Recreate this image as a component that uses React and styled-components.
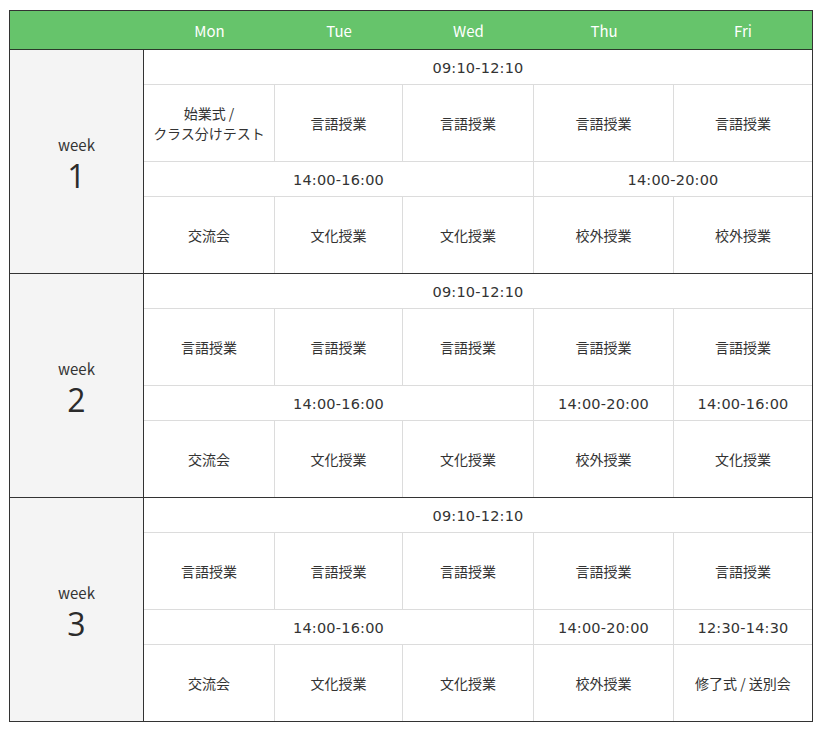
import React from 'react'
import styled, { createGlobalStyle } from 'styled-components'

const GlobalStyle = createGlobalStyle`
  body {
    margin: 0;
    background: #fff;
    font-family: "Noto Sans CJK JP", sans-serif;
    color: #333;
  }
`

const days = ["Mon", "Tue", "Wed", "Thu", "Fri"];

const weeks = [
  {
    no: 1,
    am: [["09:10-12:10", 5]],
    amClasses: ["始業式 /\nクラス分けテスト", "言語授業", "言語授業", "言語授業", "言語授業"],
    pm: [["14:00-16:00", 3], ["14:00-20:00", 2]],
    pmClasses: ["交流会", "文化授業", "文化授業", "校外授業", "校外授業"],
  },
  {
    no: 2,
    am: [["09:10-12:10", 5]],
    amClasses: ["言語授業", "言語授業", "言語授業", "言語授業", "言語授業"],
    pm: [["14:00-16:00", 3], ["14:00-20:00", 1], ["14:00-16:00", 1]],
    pmClasses: ["交流会", "文化授業", "文化授業", "校外授業", "文化授業"],
  },
  {
    no: 3,
    am: [["09:10-12:10", 5]],
    amClasses: ["言語授業", "言語授業", "言語授業", "言語授業", "言語授業"],
    pm: [["14:00-16:00", 3], ["14:00-20:00", 1], ["12:30-14:30", 1]],
    pmClasses: ["交流会", "文化授業", "文化授業", "校外授業", "修了式 / 送別会"],
  },
];

function TimeRow({ slots, row }) {
  let col = 2;
  return slots.map(([time, span], i) => {
    const start = col;
    col += span;
    return (
      <TimeCell key={i} $row={row} $start={start} $span={span} $last={col === 7}>
        {time}
      </TimeCell>
    );
  });
}

function ClassRow({ items, row }) {
  return items.map((item, i) => (
    <ClassCell key={i} $row={row} $start={i + 2} $span={1} $last={i === 4} $bottom={row === 4}>
      {item}
    </ClassCell>
  ));
}

export default function App() {
  return (
    <>
      <GlobalStyle />
      <Table>
        <Header>
          <span />
          {days.map((d) => (
            <Day key={d}>{d}</Day>
          ))}
        </Header>
        {weeks.map((w) => (
          <Week key={w.no}>
            <WeekLabel>
              <small>week</small>
              <strong>{w.no}</strong>
            </WeekLabel>
            <TimeRow slots={w.am} row={1} />
            <ClassRow items={w.amClasses} row={2} />
            <TimeRow slots={w.pm} row={3} />
            <ClassRow items={w.pmClasses} row={4} />
          </Week>
        ))}
      </Table>
    </>
  )
}

const cols = "134px 131px 128px 131px 140px 138px";

const Table = styled.div`
  width: 804px;
  margin: 10px 0 0 9px;
  border: 1px solid #333;
  box-sizing: border-box;
`

const Header = styled.div`
  display: grid;
  grid-template-columns: ${cols};
  height: 39px;
  background: #66c46b;
  border-bottom: 1px solid #2a3a2a;
  box-sizing: border-box;
`

const Day = styled.div`
  display: flex;
  align-items: center;
  justify-content: center;
  color: #fff;
  font-size: 15px;
`

const Week = styled.div`
  display: grid;
  grid-template-columns: ${cols};
  grid-template-rows: 35px 77px 35px 76px;
  & + & {
    border-top: 1px solid #333;
  }
`

const WeekLabel = styled.div`
  grid-column: 1;
  grid-row: 1 / 5;
  background: #f4f4f4;
  border-right: 1px solid #333;
  display: flex;
  flex-direction: column;
  align-items: center;
  justify-content: center;
  gap: 2px;
  padding-top: 6px;

  small {
    font-size: 15px;
    line-height: 20px;
    color: #333;
  }
  strong {
    font-family: "Open Sans", sans-serif;
    font-weight: 400;
    font-size: 32px;
    line-height: 38px;
    color: #2b2b2b;
  }
`

const Cell = styled.div`
  grid-row: ${(p) => p.$row};
  grid-column: ${(p) => p.$start} / span ${(p) => p.$span};
  display: flex;
  align-items: center;
  justify-content: center;
  text-align: center;
  box-sizing: border-box;
  border-right: ${(p) => (p.$last ? "none" : "1px solid #dcdcdc")};
  border-bottom: ${(p) => (p.$bottom ? "none" : "1px solid #dcdcdc")};
  color: #333;
`

const TimeCell = styled(Cell)`
  font-family: "DejaVu Sans", sans-serif;
  font-size: 14.5px;
  letter-spacing: 0.2px;
  padding-top: 1px;
`

const ClassCell = styled(Cell)`
  font-size: 14px;
  line-height: 20px;
  white-space: pre-line;
`
